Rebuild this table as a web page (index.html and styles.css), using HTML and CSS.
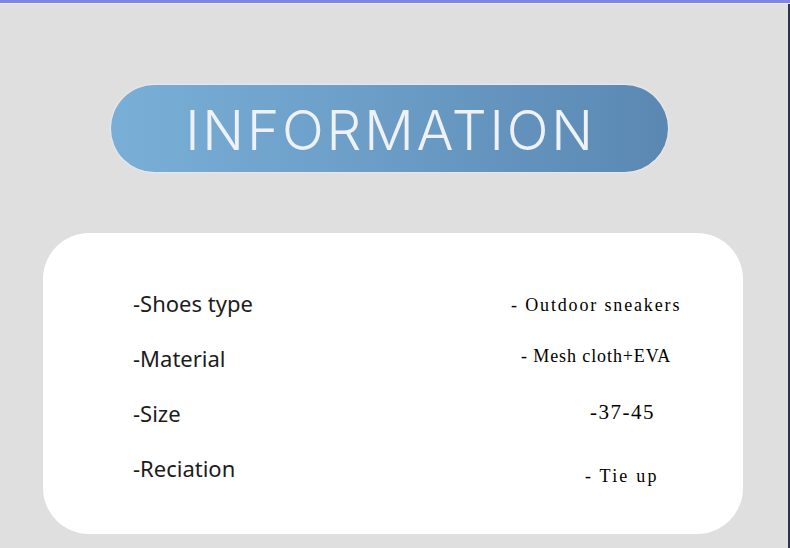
FILE: index.html
```html
<!DOCTYPE html>
<html lang="en">
<head>
<meta charset="utf-8">
<title>Information</title>
<link rel="stylesheet" href="styles.css">
</head>
<body>
<div class="topbar"></div>
<div class="content">
  <div class="pill"><span class="pill-text">INFORMATION</span></div>
  <div class="card">
    <div class="row">
      <div class="label">-Shoes type</div>
      <div class="value v1">- Outdoor sneakers</div>
    </div>
    <div class="row">
      <div class="label">-Material</div>
      <div class="value v2">- Mesh cloth+EVA</div>
    </div>
    <div class="row">
      <div class="label">-Size</div>
      <div class="value v3">-37-45</div>
    </div>
    <div class="row">
      <div class="label">-Reciation</div>
      <div class="value v4">- Tie up</div>
    </div>
  </div>
</div>
</body>
</html>
```
FILE: styles.css
```css
html, body {
  margin: 0;
  padding: 0;
  background: #dfdfdf;
  width: 790px;
  height: 548px;
  overflow: hidden;
}

.topbar {
  height: 3px;
  background: #7d86e0;
  border-bottom: 1px solid #e8e8ef;
}

.content {
  height: 544px;
  border-right: 2px solid #2b3652;
  box-sizing: border-box;
  padding-top: 81px;
}

.pill {
  margin-left: 111px;
  width: 557px;
  height: 87px;
  border-radius: 44px;
  background: linear-gradient(90deg, #79afd7 0%, #6c9ec8 45%, #5a88b2 100%);
  box-shadow: 0 0 2px 1px rgba(255, 255, 255, 0.35);
  display: flex;
  align-items: center;
  justify-content: center;
}

.pill-text {
  font-family: Inter, "Noto Sans", sans-serif;
  font-weight: 300;
  font-size: 55px;
  letter-spacing: 2.8px;
  color: #eef1f5;
  margin-left: 2px;
  margin-top: 4px;
  line-height: 1;
}

.card {
  margin-top: 61px;
  margin-left: 43px;
  width: 700px;
  height: 301px;
  box-sizing: border-box;
  background: #ffffff;
  border-radius: 46px;
  padding-top: 42px;
  padding-left: 90px;
}

.row {
  display: grid;
  grid-template-columns: 378px 1fr;
  height: 55px;
  align-items: center;
}

.label {
  font-family: "Noto Sans", sans-serif;
  font-size: 22px;
  color: #1c1c1c;
  line-height: 1;
}

.value {
  font-family: "Liberation Serif", serif;
  font-size: 18px;
  letter-spacing: 1.85px;
  color: #000000;
  line-height: 1;
  white-space: pre;
}

.v1 { margin-left: 0; margin-top: 4px; }
.v2 { margin-left: 10px; margin-top: -4px; letter-spacing: 0.9px; }
.v3 { margin-left: 79px; font-size: 21px; letter-spacing: 1.5px; }
.v4 { margin-left: 74px; margin-top: 16px; letter-spacing: 2.2px; }
```
